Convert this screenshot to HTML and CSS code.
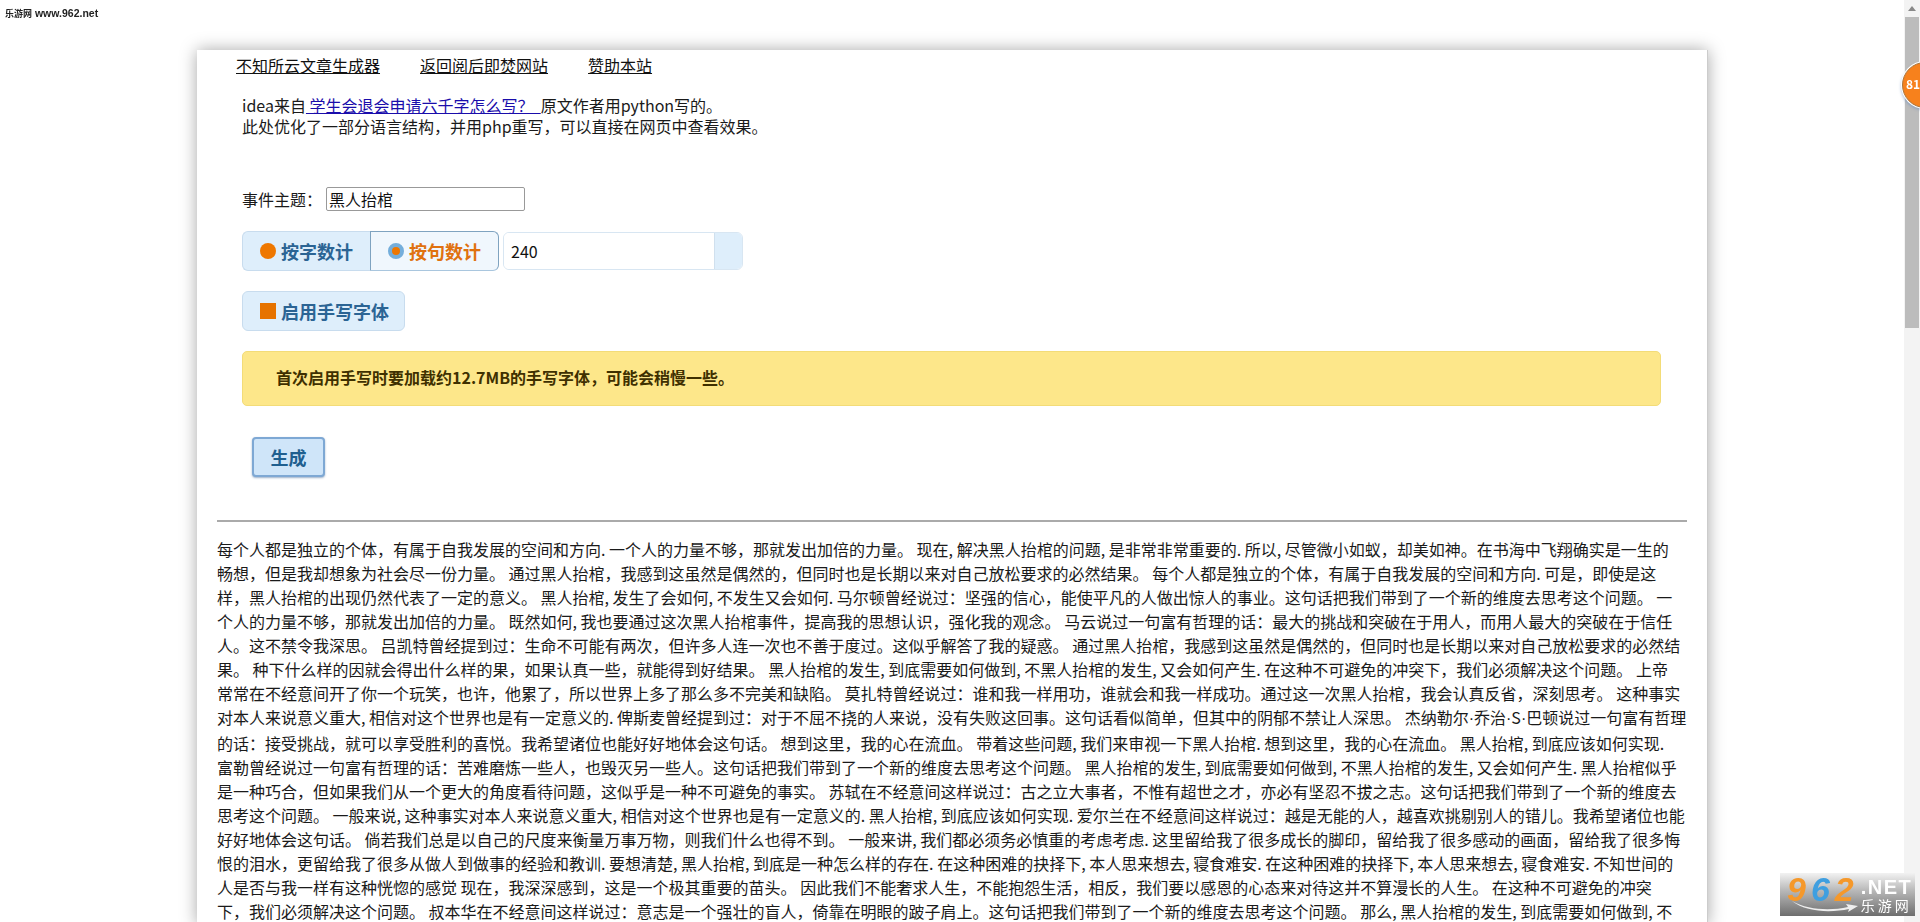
FILE: index.html
```html
<!DOCTYPE html>
<html lang="zh-CN">

<head>
    <meta charset="UTF-8">
    <meta name="viewport" content="width=device-width, initial-scale=1.0">
    <title>不知所云文章生成器</title>
    <link rel="stylesheet" href="styles.css">
</head>

<body>
    <div class="watermark"><span class="watermark-cn">乐游网</span> www.962.net</div>

    <div class="page">
        <div class="container">
            <nav class="nav">
                <a href="#">不知所云文章生成器</a>
                <a href="#">返回阅后即焚网站</a>
                <a href="#">赞助本站</a>
            </nav>

            <p class="intro">
                idea来自<a href="#" class="intro-link"> 学生会退会申请六千字怎么写？&nbsp;&nbsp;</a>原文作者用python写的。<br>
                此处优化了一部分语言结构，并用php重写，可以直接在网页中查看效果。
            </p>

            <form class="form">
                <div class="topic-row">
                    <label for="topic">事件主题：</label>
                    <input type="text" id="topic" class="topic-input" value="黑人抬棺">
                </div>

                <div class="count-row">
                    <div class="btn-group">
                        <div class="opt"><span class="dot"></span>按字数计</div>
                        <div class="opt opt-on"><span class="dot dot-on"></span>按句数计</div>
                    </div>
                    <div class="count-field">
                        <input type="text" class="count-input" value="240">
                        <span class="count-addon"></span>
                    </div>
                </div>

                <div class="opt opt-single"><span class="square"></span>启用手写字体</div>

                <div class="notice">首次启用手写时要加载约12.7MB的手写字体，可能会稍慢一些。</div>

                <button type="button" class="gen-btn">生成</button>
            </form>

            <hr class="divider">

            <div class="article">
                每个人都是独立的个体，有属于自我发展的空间和方向. 一个人的力量不够，那就发出加倍的力量。 现在, 解决黑人抬棺的问题, 是非常非常重要的. 所以, 尽管微小如蚁，却美如神。在书海中飞翔确实是一生的<br>
                畅想，但是我却想象为社会尽一份力量。 通过黑人抬棺，我感到这虽然是偶然的，但同时也是长期以来对自己放松要求的必然结果。 每个人都是独立的个体，有属于自我发展的空间和方向. 可是，即使是这<br>
                样，黑人抬棺的出现仍然代表了一定的意义。 黑人抬棺, 发生了会如何, 不发生又会如何. 马尔顿曾经说过：坚强的信心，能使平凡的人做出惊人的事业。这句话把我们带到了一个新的维度去思考这个问题。 一<br>
                个人的力量不够，那就发出加倍的力量。 既然如何, 我也要通过这次黑人抬棺事件，提高我的思想认识，强化我的观念。 马云说过一句富有哲理的话：最大的挑战和突破在于用人，而用人最大的突破在于信任<br>
                人。这不禁令我深思。 吕凯特曾经提到过：生命不可能有两次，但许多人连一次也不善于度过。这似乎解答了我的疑惑。 通过黑人抬棺，我感到这虽然是偶然的，但同时也是长期以来对自己放松要求的必然结<br>
                果。 种下什么样的因就会得出什么样的果，如果认真一些，就能得到好结果。 黑人抬棺的发生, 到底需要如何做到, 不黑人抬棺的发生, 又会如何产生. 在这种不可避免的冲突下，我们必须解决这个问题。 上帝<br>
                常常在不经意间开了你一个玩笑，也许，他累了，所以世界上多了那么多不完美和缺陷。 莫扎特曾经说过：谁和我一样用功，谁就会和我一样成功。通过这一次黑人抬棺，我会认真反省，深刻思考。 这种事实<br>
                对本人来说意义重大, 相信对这个世界也是有一定意义的. 俾斯麦曾经提到过：对于不屈不挠的人来说，没有失败这回事。这句话看似简单，但其中的阴郁不禁让人深思。 杰纳勒尔<span class="mid-dot">·</span>乔治<span class="mid-dot">·</span>S<span class="mid-dot">·</span>巴顿说过一句富有哲理<br>
                的话：接受挑战，就可以享受胜利的喜悦。我希望诸位也能好好地体会这句话。 想到这里，我的心在流血。 带着这些问题, 我们来审视一下黑人抬棺. 想到这里，我的心在流血。 黑人抬棺, 到底应该如何实现.<br>
                富勒曾经说过一句富有哲理的话：苦难磨炼一些人，也毁灭另一些人。这句话把我们带到了一个新的维度去思考这个问题。 黑人抬棺的发生, 到底需要如何做到, 不黑人抬棺的发生, 又会如何产生. 黑人抬棺似乎<br>
                是一种巧合，但如果我们从一个更大的角度看待问题，这似乎是一种不可避免的事实。 苏轼在不经意间这样说过：古之立大事者，不惟有超世之才，亦必有坚忍不拔之志。这句话把我们带到了一个新的维度去<br>
                思考这个问题。 一般来说, 这种事实对本人来说意义重大, 相信对这个世界也是有一定意义的. 黑人抬棺, 到底应该如何实现. 爱尔兰在不经意间这样说过：越是无能的人，越喜欢挑剔别人的错儿。我希望诸位也能<br>
                好好地体会这句话。 倘若我们总是以自己的尺度来衡量万事万物，则我们什么也得不到。 一般来讲, 我们都必须务必慎重的考虑考虑. 这里留给我了很多成长的脚印，留给我了很多感动的画面，留给我了很多悔<br>
                恨的泪水，更留给我了很多从做人到做事的经验和教训. 要想清楚, 黑人抬棺, 到底是一种怎么样的存在. 在这种困难的抉择下, 本人思来想去, 寝食难安. 在这种困难的抉择下, 本人思来想去, 寝食难安. 不知世间的<br>
                人是否与我一样有这种恍惚的感觉 现在，我深深感到，这是一个极其重要的苗头。 因此我们不能奢求人生，不能抱怨生活，相反，我们要以感恩的心态来对待这并不算漫长的人生。 在这种不可避免的冲突<br>
                下，我们必须解决这个问题。 叔本华在不经意间这样说过：意志是一个强壮的盲人，倚靠在明眼的跛子肩上。这句话把我们带到了一个新的维度去思考这个问题。 那么, 黑人抬棺的发生, 到底需要如何做到, 不
            </div>
        </div>
    </div>

    <div class="scrollbar">
        <span class="scroll-arrow"></span>
        <span class="scroll-thumb"></span>
    </div>

    <div class="badge">81</div>

    <div class="logo">
        <svg class="logo-swoosh" width="66" height="12" viewBox="0 0 66 12">
            <path d="M0 0 C16 9 38 10 56 6 L54 3 L66 5 L56 11 L57 8 C38 12 14 11 0 0 Z" fill="#eee"/>
        </svg>
        <span class="logo-num">9<span class="logo-six">6</span>2</span>
        <span class="logo-side">
            <span class="logo-net">.NET</span>
            <span class="logo-cn">乐游网</span>
        </span>
    </div>
</body>

</html>
```

FILE: styles.css
```css
html,
body {
    height: 100%;
}

body {
    margin: 0;
    display: flex;
    overflow: hidden;
    background: #fff;
    color: #1a1a1a;
    font-family: "Noto Sans CJK SC", "Noto Sans", sans-serif;
    font-size: 16px;
    line-height: 24px;
}

.page {
    flex: 1;
    padding-top: 50px;
}

.container {
    width: 1470px;
    margin: 0 auto;
    padding: 3px 20px 0;
    background: #fff;
    box-shadow: 0 0 16px rgba(0, 0, 0, 0.35);
    border-right: 1px solid #ccc;
    margin-left: 197px;
    height: 100%;
}

.nav {
    display: flex;
    gap: 40px;
    padding-left: 19px;
}

.nav a {
    color: #111;
}

.intro {
    margin: 18px 0 0;
    padding-left: 25px;
    line-height: 21px;
    white-space: nowrap;
}

.intro-link {
    color: #1a0dab;
}

.form {
    display: flex;
    flex-direction: column;
    align-items: flex-start;
    padding-left: 25px;
    margin-top: 50px;
}

.topic-row {
    display: flex;
    align-items: center;
    gap: 4px;
    height: 24px;
}

.topic-input {
    box-sizing: border-box;
    width: 199px;
    height: 24px;
    padding: 0 2px;
    border: 1px solid #999;
    border-radius: 2px;
    font: inherit;
    color: #111;
}

.count-row {
    display: flex;
    align-items: center;
    gap: 4px;
    margin-top: 20px;
}

.btn-group {
    display: flex;
}

.opt {
    box-sizing: border-box;
    display: flex;
    align-items: center;
    height: 40px;
    padding: 0 17px;
    background: #deeefb;
    border: 1px solid #c8dcee;
    color: #2b6494;
    font-size: 18px;
    font-weight: 700;
    white-space: nowrap;
}

.btn-group .opt:first-child {
    border-radius: 6px 0 0 6px;
    border-right: 0;
}

.opt-on {
    background: #f0f7fd;
    border: 1px solid #7fa3c0;
    border-bottom-color: #a9c6de;
    border-radius: 0 6px 6px 0;
    color: #e0710f;
}

.dot {
    width: 16px;
    height: 16px;
    margin-right: 5px;
    border-radius: 50%;
    background: #ee7700;
}

.dot-on {
    box-sizing: border-box;
    border: 4px solid #74aedb;
}

.square {
    flex: none;
    width: 16px;
    height: 16px;
    margin-right: 5px;
    background: #e67300;
}

.count-field {
    display: flex;
    box-sizing: border-box;
    width: 240px;
    height: 38px;
    border: 1px solid #d8e6f2;
    border-radius: 6px;
    overflow: hidden;
}

.count-input {
    flex: 1;
    min-width: 0;
    padding: 0 7px;
    border: 0;
    font: inherit;
    color: #111;
}

.count-addon {
    width: 27px;
    background: #deeefb;
    border-left: 1px solid #d0e0ee;
}

.opt-single {
    width: 163px;
    margin-top: 20px;
    border-radius: 6px;
}

.notice {
    box-sizing: border-box;
    width: 1419px;
    height: 55px;
    margin-top: 20px;
    padding-left: 33px;
    background: #fde78a;
    border: 1px solid #f3dc78;
    border-radius: 5px;
    color: #3f3000;
    font-weight: 700;
    line-height: 51px;
}

.gen-btn {
    width: 73px;
    height: 40px;
    margin: 31px 0 0 10px;
    background: #cfe5f9;
    border: 2px solid #7ea8d4;
    border-radius: 4px;
    box-shadow: 0 1px 2px rgba(60, 100, 150, 0.5);
    color: #1f5f8f;
    font: inherit;
    font-size: 18px;
    font-weight: 700;
}

.divider {
    margin: 43px 0 0;
    border: 0;
    border-top: 2px solid #aaa;
}

.article {
    margin-top: 15px;
    white-space: nowrap;
}

.mid-dot {
    font-family: "Liberation Sans", sans-serif;
}

.scrollbar {
    flex: 0 0 16px;
    position: relative;
    background: #f3f3f3;
}

.scroll-arrow {
    position: absolute;
    top: 6px;
    left: 4px;
    border: 4px solid transparent;
    border-top: 0;
    border-bottom: 5px solid #888;
}

.scroll-thumb {
    position: absolute;
    top: 17px;
    left: 1px;
    width: 14px;
    height: 311px;
    background: #bcbcbc;
}

/* overlays */
.watermark {
    position: fixed;
    top: 4px;
    left: 5px;
    color: #222;
    font-family: "Liberation Sans", "Noto Sans CJK SC", sans-serif;
    font-size: 10.5px;
    font-weight: 700;
    line-height: 18px;
    white-space: nowrap;
}

.watermark-cn {
    font-size: 9px;
}

.badge {
    position: fixed;
    top: 62px;
    left: 1902px;
    box-sizing: border-box;
    width: 46px;
    height: 46px;
    padding-left: 3px;
    background: #f7811c;
    border: 1px solid #a8743c;
    border-radius: 50%;
    box-shadow: 0 0 0 1px #fff, -1px 2px 3px rgba(90, 130, 190, 0.5);
    color: #fff;
    font-size: 12px;
    font-weight: 700;
    line-height: 42px;
}

.logo {
    position: fixed;
    right: 5px;
    bottom: 6px;
    box-sizing: border-box;
    display: flex;
    width: 135px;
    height: 43px;
    padding-left: 7px;
    background: linear-gradient(#f2f2f2, #b9b9b9 40%, #6e6e6e);
}

.logo-swoosh {
    position: absolute;
    left: 12px;
    bottom: 3px;
}

.logo-num {
    color: #f5982a;
    font-family: "Liberation Sans", sans-serif;
    font-size: 34px;
    font-style: italic;
    font-weight: 700;
    line-height: 32px;
    letter-spacing: 5px;
}

.logo-six {
    color: #3f9fe0;
}

.logo-side {
    display: flex;
    flex-direction: column;
    margin-left: 2px;
    color: #fff;
}

.logo-net {
    padding-top: 4px;
    font-family: "Liberation Sans", sans-serif;
    font-size: 20px;
    font-weight: 700;
    line-height: 20px;
    letter-spacing: 1.5px;
}

.logo-cn {
    font-size: 14px;
    line-height: 17px;
    letter-spacing: 3px;
}
```
